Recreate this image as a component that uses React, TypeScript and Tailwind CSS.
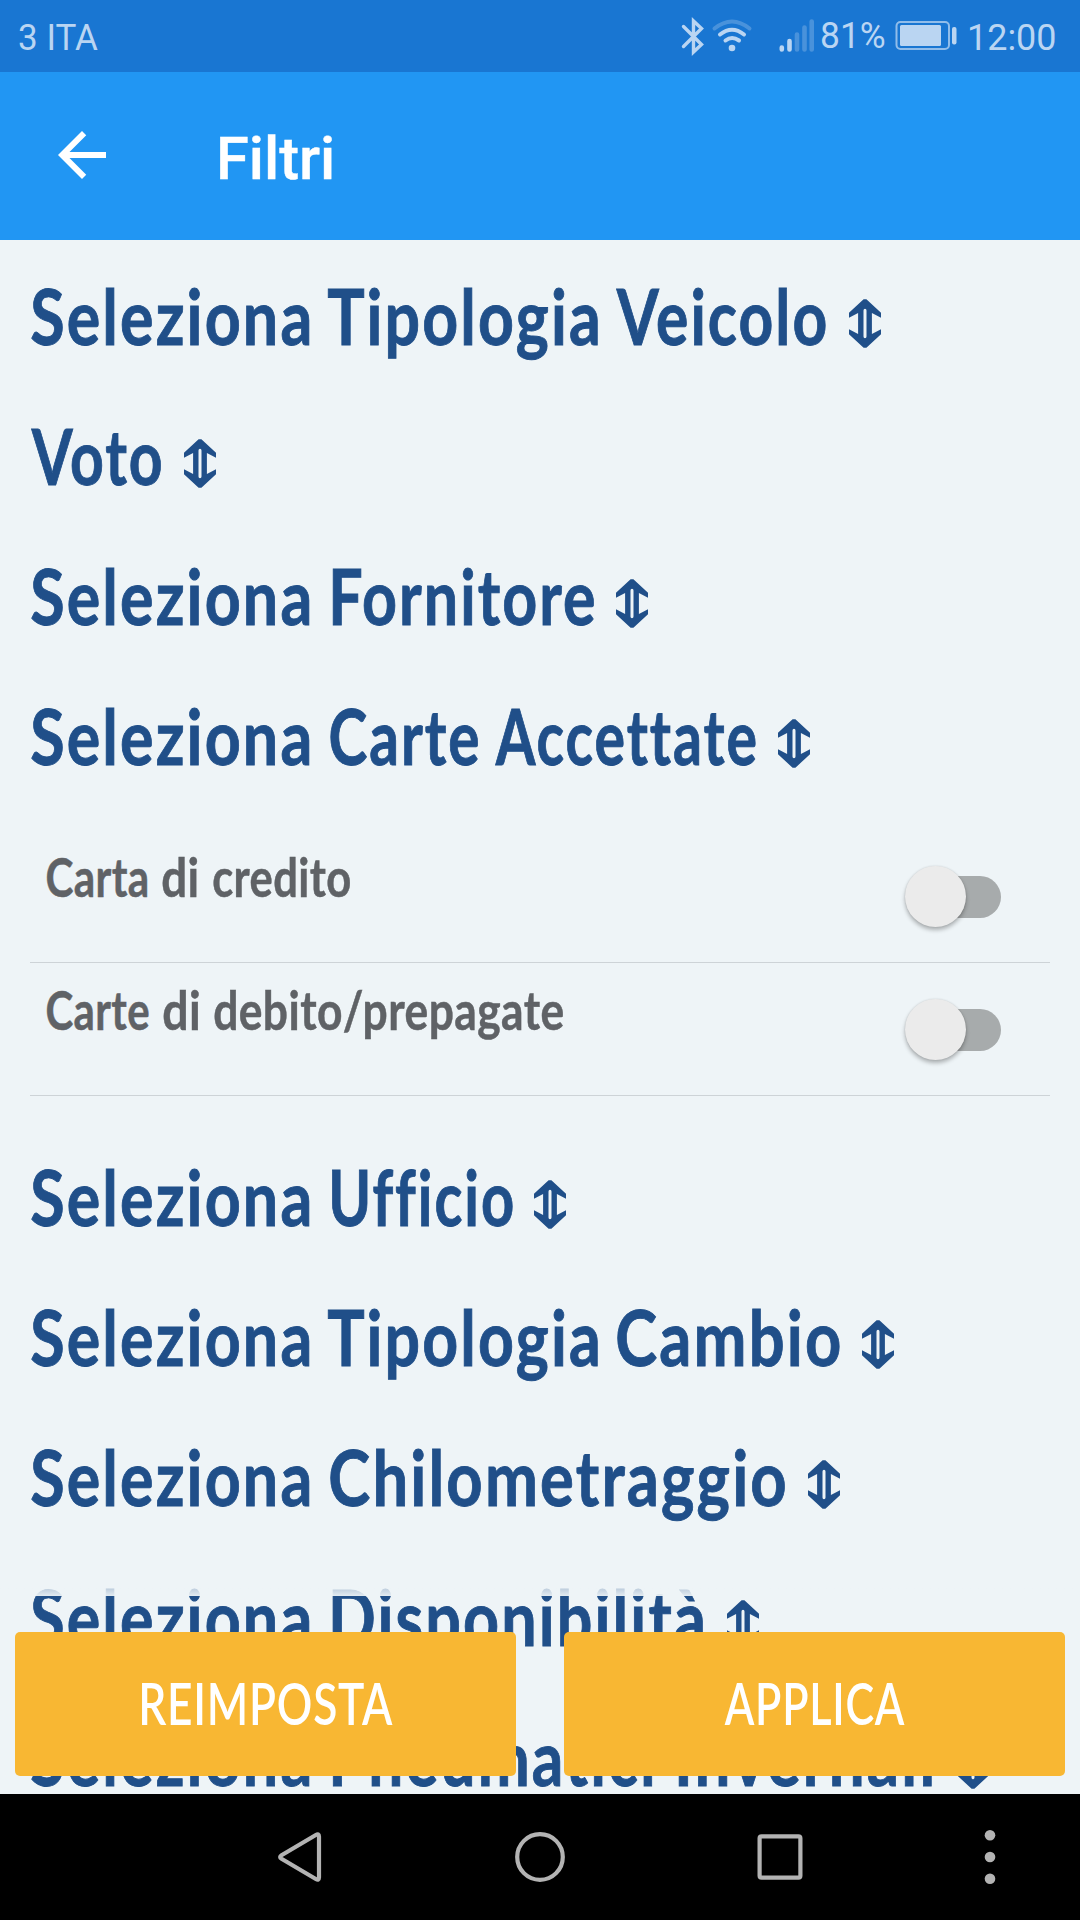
const ctx = document.createElement("canvas").getContext("2d")!;

type WordSpec = { text: string; gap?: number; width: number };

/* A word condensed horizontally so that its ink spans the given width. */
function Word({ text, gap = 0, width, size, weight, spacing, family = "Lato" }: WordSpec & { size: number; weight: number; spacing: number; family?: string }) {
  ctx.font = `${weight} ${size}px ${family}`;
  ctx.letterSpacing = `${spacing}px`;
  const m = ctx.measureText(text);
  const left = -m.actualBoundingBoxLeft;
  const scale = width / (m.actualBoundingBoxRight - left);
  return (
    <span className="block shrink-0 whitespace-nowrap" style={{ width, marginLeft: gap }}>
      <span
        className="inline-block origin-left"
        style={{
          fontFamily: `${family}, "Liberation Sans", sans-serif`,
          fontSize: size,
          fontWeight: weight,
          letterSpacing: spacing,
          transform: `translateX(${-left * scale}px) scaleX(${scale})`,
        }}
      >
        {text}
      </span>
    </span>
  );
}

function UpDown() {
  return (
    <svg className="mt-[48.5px] h-[49px] w-8 shrink-0" viewBox="0 0 32 49" fill="currentColor" fillRule="evenodd">
      <path d="M14.6.3H17.4L32 13.7V18.7L22.9 14.1V34.9L32 30.3V35.3L17.4 48.7H14.6L0 35.3V30.3L9.1 34.9V14.1L0 18.7V13.7ZM16 9.8Q14.5 9.8 14.5 11.5V37.5Q14.5 39.2 16 39.2T17.5 37.5V11.5Q17.5 9.8 16 9.8Z" />
    </svg>
  );
}

function FilterHeading({ words, arrowGap = 22 }: { words: WordSpec[]; arrowGap?: number }) {
  return (
    <h2 className="flex h-[140px] shrink-0 items-start pl-[31px] leading-[131px] text-[#204f89]">
      <span className="flex [-webkit-text-stroke:0.9px_#204f89]">
        {words.map((w, i) => (
          <Word key={i} {...w} size={76.8} weight={700} spacing={2.6} />
        ))}
      </span>
      <span style={{ width: arrowGap + 1 }} />
      <UpDown />
    </h2>
  );
}

function ToggleRow({ words }: { words: WordSpec[] }) {
  return (
    <div className="mx-[30px] flex h-[133px] shrink-0 justify-between border-b border-[#cdd3d7] pl-[17px] pr-[49px] leading-[93px] text-[#5f6266]">
      <div className="flex [-webkit-text-stroke:0.5px_#5f6266]">
        {words.map((w, i) => (
          <Word key={i} {...w} size={53} weight={700} spacing={0.5} />
        ))}
      </div>
      <button role="switch" aria-checked="false" className="relative mt-[46px] h-[42px] w-[86px] rounded-full bg-[#a7abac]">
        <span className="absolute -left-[10px] -top-[10.5px] size-[61px] rounded-full bg-[#ebebeb] shadow-[0_3px_4px_rgba(0,0,0,0.28),0_0_2px_rgba(0,0,0,0.12)]" />
      </button>
    </div>
  );
}

const seleziona: WordSpec = { text: "Seleziona", width: 278 };

const upper: { words: WordSpec[]; arrowGap?: number }[] = [
  { words: [seleziona, { text: "Tipologia", gap: 18.5, width: 269.5 }, { text: "Veicolo", gap: 19, width: 209.5 }] },
  { words: [{ text: "Voto", width: 130 }] },
  { words: [seleziona, { text: "Fornitore", gap: 24, width: 261 }], arrowGap: 21 },
  { words: [seleziona, { text: "Carte", gap: 21, width: 148 }, { text: "Accettate", gap: 17, width: 260.5 }], arrowGap: 21 },
];

const lower: { words: WordSpec[]; arrowGap?: number }[] = [
  { words: [seleziona, { text: "Ufficio", gap: 22.5, width: 180.5 }], arrowGap: 21 },
  { words: [seleziona, { text: "Tipologia", gap: 18.5, width: 269.5 }, { text: "Cambio", gap: 20, width: 222.5 }], arrowGap: 21.5 },
  { words: [seleziona, { text: "Chilometraggio", gap: 21, width: 455 }], arrowGap: 22 },
  { words: [seleziona, { text: "Disponibilità", gap: 24, width: 369.5 }], arrowGap: 23.5 },
  { words: [seleziona, { text: "Pneumatici", gap: 24, width: 320 }, { text: "Invernali", gap: 26, width: 253.5 }], arrowGap: 23.5 },
];

function StatusBar() {
  return (
    <div className="flex h-[72px] shrink-0 items-start justify-between bg-[#1976d2] leading-[76px] text-[#bad5f2]">
      <div className="ml-[19px] flex">
        <Word text="3 ITA" width={79} size={36.5} weight={400} spacing={0} family="Roboto" />
      </div>
      <div className="mr-[25px] flex">
        <svg className="h-[72px] w-[160px]" viewBox="660 0 160 72" fill="none" stroke="currentColor" strokeWidth="3.4" strokeLinecap="round" strokeLinejoin="round">
          <path d="M683.5 26.5L701.5 44.5L693.5 52V21L701.5 28.5L683.5 46.5" strokeLinejoin="miter" />
          <path d="M714.5 28.5Q732 14.5 749.5 28.5" opacity=".3" strokeWidth="4" />
          <path d="M720 34.5Q732 25 744 34.5M725.5 40.5Q732 35.5 739 40.5" strokeWidth="4" />
          <circle cx="732" cy="48" r="3.3" fill="currentColor" stroke="none" />
          <path d="M781.8 47.5V49.5M789.5 41V49.5" strokeWidth="4.6" />
          <path d="M797 34.5V49.5M804.5 27.5V49.5M811.7 21.5V49.5" strokeWidth="4.6" opacity=".3" />
        </svg>
        <div className="flex leading-[71px]">
          <Word text="81%" gap={2} width={63} size={36.5} weight={400} spacing={0} family="Roboto" />
        </div>
        <svg className="ml-[10px] h-[72px] w-[65px]" viewBox="895 0 65 72" fill="none">
          <rect x="896.5" y="22" width="52.5" height="27" rx="4" stroke="currentColor" strokeWidth="2" opacity=".75" />
          <rect x="900" y="25" width="41" height="21" rx="1.5" fill="currentColor" />
          <rect x="952" y="27" width="4.5" height="17.5" rx="2" fill="currentColor" />
        </svg>
        <Word text="12:00" gap={10} width={85} size={36.5} weight={400} spacing={0} family="Roboto" />
      </div>
    </div>
  );
}

export default function App() {
  return (
    <div className="relative flex h-[1920px] w-[1080px] flex-col overflow-hidden bg-[#eef4f7]">
      <StatusBar />
      <header className="flex h-[168px] shrink-0 items-start bg-[#2196f3] text-white">
        <svg className="ml-[46px] mt-[47px] size-[72px]" viewBox="0 0 24 24" fill="currentColor">
          <path d="M20 11H7.83l5.59-5.59L12 4l-8 8 8 8 1.41-1.41L7.83 13H20v-2z" />
        </svg>
        <h1 className="flex leading-[173px] [-webkit-text-stroke:0.4px_white]">
          <Word text="Filtri" gap={101.5} width={112} size={60} weight={500} spacing={0} family="Roboto" />
        </h1>
      </header>

      <main className="flex h-[1554px] shrink-0 flex-col overflow-hidden pt-[10px]">
        {upper.map((h, i) => (
          <FilterHeading key={i} {...h} />
        ))}
        <div className="mt-5 mb-[35px] flex flex-col">
          <ToggleRow words={[{ text: "Carta", width: 100 }, { text: "di", gap: 15, width: 35 }, { text: "credito", gap: 16, width: 137 }]} />
          <ToggleRow words={[{ text: "Carte", width: 101.5 }, { text: "di", gap: 14.5, width: 35.5 }, { text: "debito/prepagate", gap: 15.5, width: 349 }]} />
        </div>
        {lower.map((h, i) => (
          <FilterHeading key={i} {...h} />
        ))}
      </main>

      <div className="absolute inset-x-0 top-[1584px] h-[12px] bg-linear-to-b from-[#eef4f7]/65 to-[#eef4f7]/95" />
      <div className="absolute inset-x-[15px] top-[1632px] flex justify-between leading-[141px] text-white">
        <button className="flex h-36 w-[501px] justify-center rounded-[5px] bg-[#f8b733] pl-1">
          <Word text="REIMPOSTA" width={251} size={58.6} weight={600} spacing={1} />
        </button>
        <button className="flex h-36 w-[501px] justify-center rounded-[5px] bg-[#f8b733]">
          <Word text="APPLICA" width={181} size={58.6} weight={600} spacing={1} />
        </button>
      </div>

      <nav className="h-[126px] shrink-0 bg-black text-[#b3b3b3]">
        <svg className="h-[126px] w-full" viewBox="0 0 1080 126" fill="none" stroke="currentColor" strokeWidth="4.2" strokeLinejoin="round">
          <path d="M281.5 61.2L315.8 41Q319 39.2 319 42.5V83.5Q319 86.8 315.8 85L281.5 64.8Q278.8 63 281.5 61.2Z" />
          <circle cx="540" cy="63" r="22.8" />
          <rect x="759.6" y="42.3" width="40.8" height="41.4" rx="2" />
          <g fill="currentColor" stroke="none">
            <circle cx="990" cy="41.3" r="5.3" />
            <circle cx="990" cy="63" r="5.3" />
            <circle cx="990" cy="84.7" r="5.3" />
          </g>
        </svg>
      </nav>
    </div>
  );
}
